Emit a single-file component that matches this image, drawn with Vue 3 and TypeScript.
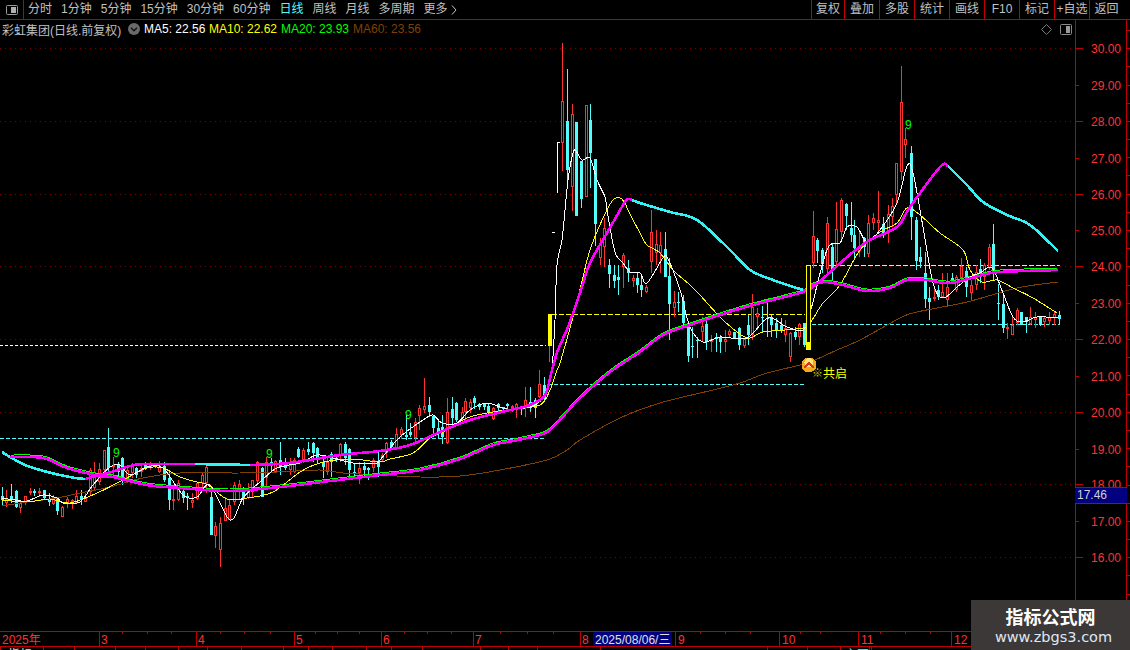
<script setup lang="ts">
type Row = [number, number, number, number, number, number]
interface Group { ox: number; oy: number; rows: Row[] }

const periods = ['分时', '1分钟', '5分钟', '15分钟', '30分钟', '60分钟', '日线', '周线', '月线', '多周期']
const actions = ['复权', '叠加', '多股', '统计', '画线', 'F10', '标记', '+自选', '返回']
const averages = [
  { label: 'MA5: 22.56', cls: 'ma5' },
  { label: 'MA10: 22.62', cls: 'ma10' },
  { label: 'MA20: 23.93', cls: 'ma20' },
  { label: 'MA60: 23.56', cls: 'ma60' },
]

// x, high, body top, body bottom, low, 0 = rising (hollow red) / 1 = falling (solid cyan); 3x crop coordinates
const groups: Group[] = [
  { ox: 0, oy: 425, rows: [
    [6,185,212,225,240,1],[18,195,222,235,245,0],[34,178,212,225,235,1],[48,195,198,245,250,1],[61,225,235,248,265,0],
    [76,213,214,235,240,0],[90,190,197,205,210,0],[103,192,197,203,212,1],[118,190,197,205,215,0],[133,195,196,220,225,1],
    [146,205,225,232,242,1],[160,210,215,238,240,0],[172,220,222,258,270,1],[187,243,245,275,275,0],[202,215,222,237,248,0],
    [216,222,225,230,252,0],[229,195,213,235,238,0],[243,195,212,222,240,1],[256,205,215,230,232,0],[270,130,135,200,210,0],
    [283,110,140,190,195,0],[298,115,133,170,180,0],[313,75,75,135,140,0],[325,10,67,130,160,1],[340,95,120,125,155,0],
    [354,110,120,140,165,1],[367,95,98,160,180,1],[382,125,135,160,175,0],[396,115,122,145,160,0],[409,125,128,150,160,1],
    [423,120,130,140,155,0],[436,110,113,125,135,1],[451,110,120,130,135,0],[464,115,120,125,130,1],[478,108,125,140,145,0],
    [493,110,122,165,170,1],[508,140,160,225,255,1],[520,190,222,228,255,0],[535,165,175,225,228,0],[549,190,197,218,235,1],
    [562,205,212,220,255,1],[577,205,225,235,250,0],[590,170,175,222,225,0],[605,145,150,175,195,0],[619,120,125,175,205,0],
    [632,190,215,330,330,1],[646,290,303,333,370,0],[661,275,295,375,425,0],[674,215,250,288,288,0],[688,225,240,285,285,0],
    [701,170,180,230,240,0],[716,165,178,192,222,0],[730,185,190,222,240,1],[743,175,198,220,222,0],[757,165,165,200,215,0],
    [771,108,110,168,180,0],[785,125,128,215,215,1],[799,95,112,160,185,0],[813,100,110,122,145,1],[826,105,108,140,145,0],
    [841,52,105,125,150,1],[855,100,120,128,135,1],[869,100,120,135,150,0],[883,100,105,140,145,0],[895,65,72,95,100,1],
    [909,70,75,105,115,0],[925,52,72,80,90,1],[939,52,55,85,110,1],[952,65,68,105,115,1],[968,90,110,125,160,1],
    [980,100,110,140,150,0],[994,80,88,110,155,1],[1007,90,98,105,110,1],[1021,55,57,90,110,0],[1035,50,57,100,120,1],
    [1048,70,72,135,165,1],[1062,115,140,145,160,1],[1078,110,130,145,178,0],[1091,110,122,135,160,1],[1105,125,130,135,165,1],
    [1120,100,105,130,140,0],[1133,80,112,125,155,1],
  ] },
  { ox: 380, oy: 370, rows: [
    [5,250,255,270,275,0],[18,215,220,250,265,0],[33,210,215,230,235,1],[48,175,193,235,240,0],[62,170,177,195,208,0],
    [77,135,195,200,210,1],[91,160,185,195,200,1],[104,145,155,205,215,0],[118,105,115,137,180,0],[131,25,108,120,130,0],
    [146,80,105,125,140,1],[160,135,138,173,195,1],[173,150,175,190,205,1],[187,135,170,200,222,1],[202,85,125,220,222,0],
    [215,82,118,145,165,1],[229,95,100,150,155,1],[245,112,125,145,150,0],[255,85,93,125,155,0],[270,88,95,115,130,0],
    [283,78,85,98,118,1],[298,100,102,110,120,1],[312,98,103,112,120,1],[325,100,108,130,135,1],[340,112,113,148,150,0],
    [355,100,103,113,125,1],[368,110,112,117,130,1],[382,100,102,108,125,1],[396,105,108,115,125,0],[409,100,103,120,145,0],
    [422,110,112,118,135,1],[436,52,90,110,140,0],[450,52,95,115,125,1],[464,85,90,115,145,1],[478,0,42,80,85,0],
    [493,20,45,85,95,1],
  ] },
  { ox: 540, oy: 40, rows: [
    [67,10,184,308,392,0],[81,87,243,390,432,1],[97,192,222,440,513,0],[109,245,247,527,527,1],[124,362,362,476,505,1],
    [139,195,195,470,470,0],[151,192,240,338,445,1],[166,357,357,552,618,1],
  ] },
  { ox: 540, oy: 210, rows: [
    [181,85,103,145,165,0],[193,25,55,112,170,0],[208,148,165,192,235,1],[221,165,195,213,235,1],[235,165,202,210,255,1],
    [250,130,135,172,235,0],[263,150,175,188,215,1],[278,195,205,213,232,0],[292,190,205,225,250,1],[304,200,226,240,260,1],
    [319,225,232,246,250,0],[334,0,67,155,190,0],[347,60,102,130,165,0],[361,65,105,130,190,0],[374,67,118,200,200,1],
    [388,145,198,282,390,1],[403,243,277,293,320,0],[415,245,276,280,305,1],[430,255,272,340,350,1],[445,340,340,437,455,1],
    [457,350,408,411,443,1],[472,380,390,393,445,1],
  ] },
  { ox: 640, oy: 220, rows: [
    [186,290,318,335,365,0],[199,300,312,365,390,1],[214,345,358,365,395,0],[227,340,350,356,395,1],[241,345,350,365,400,1],
    [256,330,358,365,395,0],[268,328,333,345,355,0],[283,335,335,355,355,1],[298,320,325,375,390,1],[311,355,358,378,385,0],
    [325,285,315,345,375,1],[337,222,262,345,360,0],[352,265,280,290,330,0],[367,257,290,292,340,1],[380,245,295,295,350,1],
    [394,285,290,315,350,1],[409,295,310,330,355,1],[422,295,315,330,340,1],[436,300,325,345,365,0],[451,335,340,410,425,0],
    [464,320,335,350,360,1],[478,310,312,350,375,0],[491,310,310,375,380,1],
  ] },
  { ox: 800, oy: 60, rows: [
    [40,452,528,608,625,0],[52,535,540,572,610,1],[67,565,570,612,640,1],[82,470,490,628,645,0],[95,550,560,628,660,1],
    [108,425,508,605,620,0],[124,415,420,515,540,0],[137,430,432,468,510,1],[152,425,505,525,545,1],[163,480,525,565,600,1],
    [178,515,558,572,590,0],[192,530,535,560,590,1],[205,465,490,582,592,0],[220,460,475,490,510,0],[235,392,480,488,515,0],
    [248,470,492,525,535,1],[263,435,462,520,548,0],[275,415,438,470,500,0],[289,310,310,405,430,0],[304,18,127,335,360,0],
    [316,205,238,254,295,0],[332,258,280,470,540,1],[347,470,480,603,630,1],[359,560,590,605,625,1],[374,575,638,718,745,1],
    [388,680,713,725,780,1],[401,680,712,718,722,0],[415,675,690,710,720,1],[427,640,697,712,715,0],[442,640,682,720,742,0],
    [457,640,655,662,670,1],[469,645,652,690,695,0],[484,595,617,655,660,0],[499,620,632,680,710,1],[512,660,675,698,722,0],
    [527,615,635,675,690,0],[541,598,628,640,670,1],[553,610,615,650,690,0],[568,552,562,625,630,0],[580,492,552,635,660,1],
    [595,672,728,732,780,1],[610,705,733,805,818,1],[622,790,800,805,838,0],[637,765,795,825,825,0],[652,745,750,790,795,0],
    [664,755,755,795,795,1],[678,770,770,785,820,1],[691,740,770,792,795,0],[705,755,770,780,805,0],[720,770,772,795,798,1],
    [733,770,775,785,800,0],[748,755,772,782,795,0],[762,755,762,775,795,0],[776,752,765,778,793,1],
  ] },
]

const candles = groups.flatMap(g => g.rows.map(r => ({
  x: Math.round(g.ox + r[0] / 3),
  hi: Math.round(g.oy + r[1] / 3),
  top: Math.round(g.oy + r[2] / 3),
  bot: Math.round(g.oy + r[3] / 3),
  lo: Math.round(g.oy + r[4] / 3),
  fall: r[5] === 1,
})))

function curve(flat: number[], dy = 0): string {
  const p: [number, number][] = []
  for (let i = 0; i < flat.length; i += 2) p.push([flat[i], flat[i + 1] + dy])
  let d = `M${p[0][0]} ${p[0][1]}`
  for (let i = 0; i < p.length - 1; i++) {
    const a = p[Math.max(i - 1, 0)], b = p[i], c = p[i + 1], e = p[Math.min(i + 2, p.length - 1)]
    const k = 6
    d += `C${(b[0] + (c[0] - a[0]) / k).toFixed(1)} ${(b[1] + (c[1] - a[1]) / k).toFixed(1)} ${(c[0] - (e[0] - b[0]) / k).toFixed(1)} ${(c[1] - (e[1] - b[1]) / k).toFixed(1)} ${c[0]} ${c[1]}`
  }
  return d
}

const ma60 = curve([2,506,27,502,57,498,80,493,110,487,143,478,180,473,240,473,277,472,320,470,343,473,380,475,420,477,460,476,500,470,547,460,567,450,580,440,620,418,660,403,713,390,740,383,767,373,807,363,837,350,860,340,900,318,917,312,967,302,1017,288,1058,282])
const ma5 = curve([2,498,15,500,27,501,43,495,57,498,63,503,80,502,93,485,110,467,120,465,130,475,147,467,163,468,183,495,197,497,210,485,230,520,243,498,260,482,277,468,300,463,317,455,333,458,353,463,377,463,380,460,400,437,423,420,433,415,442,423,457,423,470,410,487,403,507,409,530,407,543,398,550,380,552,370,555,320,557,265,562,240,565,210,568,180,572,157,575,150,582,160,590,158,597,180,605,197,607,210,615,252,623,263,630,272,640,273,647,283,663,258,668,259,680,290,690,327,703,342,720,337,747,338,768,318,787,327,803,330,810,313,827,250,840,243,847,227,857,227,867,242,880,230,897,203,907,166,913,173,923,227,933,283,943,298,957,287,970,277,980,273,992,268,1003,293,1013,317,1023,322,1037,317,1058,318])
const ma10 = curve([2,500,27,502,50,499,70,503,97,493,123,480,147,468,163,468,180,477,197,482,208,485,227,499,247,498,273,492,300,472,320,463,350,459,380,462,390,459,413,453,430,438,447,430,467,418,487,413,513,409,540,405,550,390,557,370,560,363,573,317,583,277,590,250,603,218,613,200,620,198,625,203,628,210,640,233,647,245,660,253,673,270,690,285,700,295,723,320,747,338,763,332,803,328,812,320,823,303,840,285,860,250,880,232,897,223,907,208,920,215,940,233,963,250,970,270,982,282,997,280,1013,288,1033,298,1057,313])
const lower = [10,457,43,458,67,468,100,476,113,477,147,485,180,488,230,491,280,487,330,481,380,475,420,470,460,459,493,445,513,441,543,434,553,427,567,412,580,398,610,372,640,352,663,335,690,325,720,315,753,305,803,292,813,285,825,282,843,285,867,291,890,288,907,280,927,280,950,283,983,275,1000,272,1058,270]
const ma20 = curve(lower, -2)
const lowerPath = curve(lower)
const upperCyan = [
  curve([2,452,10,457,25,465,40,470,60,475,75,478,85,479]),
  curve([195,464,250,465]),
  curve([632,200,640,203,670,212,697,220,730,250,750,270,773,280,803,290]),
  curve([948,166,967,185,983,202,1007,215,1030,225,1058,251]),
]
const upperPink = [
  curve([85,479,100,475,115,471,130,466,145,464,195,464]),
  curve([250,465,290,463,340,455,380,451,410,445,440,432,470,420,510,410,530,405,545,395,552,370,558,350,568,327,580,293,590,263,607,233,623,205,628,199,632,200]),
  curve([803,290,813,287,853,252,870,240,897,227,910,207,940,167,948,166]),
]
const grid = [48, 121, 194, 266, 339, 412, 484, 557]
const nines: [number, number][] = [[113, 457], [266, 458], [405, 419], [905, 129]]

const prices = [
  ['30.00', 48], ['29.00', 85], ['28.00', 121], ['27.00', 158], ['26.00', 194], ['25.00', 230], ['24.00', 266],
  ['23.00', 303], ['22.00', 339], ['21.00', 376], ['20.00', 412], ['19.00', 449], ['18.00', 484], ['17.00', 521], ['16.00', 557],
].map(([label, y], i) => ({ label: label as string, y: y as number, long: i % 2 === 0 }))
const minor = Array.from({ length: 33 }, (_, i) => 30 + i * 18.18)

const dividers = [99, 196, 294, 381, 473, 580, 675, 779, 858, 951]
const months = [['2025年', 2], ['3', 101], ['4', 198], ['5', 296], ['6', 383], ['7', 475], ['8', 582], ['9', 678], ['10', 782], ['11', 861], ['12', 954]]
  .map(([t, x]) => ({ t: t as string, x: x as number }))
const timeTicks = [122, 147, 171, 220, 244, 270, 315, 337, 359, 404, 427, 451, 500, 527, 553, 620, 700, 725, 750, 800, 820, 880, 905, 930, 975]
const tabs = [43, 74, 115, 145, 178, 207, 241, 283, 308, 332, 366, 391, 422, 480, 508, 537, 600, 767, 807, 840, 869, 871]
</script>

<template>
  <div class="screen">
    <header class="toolbar">
      <div class="layout-btn">
        <svg width="12" height="10" viewBox="0 0 12 10">
          <rect x="0.5" y="0.5" width="11" height="9" rx="1" fill="#000" stroke="#9a9a9a" />
          <rect x="5" y="2" width="5" height="6" fill="#b0b0b0" />
        </svg>
      </div>
      <nav class="periods">
        <span v-for="p in periods" :key="p" :class="{ active: p === '日线' }">{{ p }}</span>
        <span class="more">更多
          <svg width="6" height="10" viewBox="0 0 6 10"><path d="M1 0.5 L5 5 L1 9.5" fill="none" stroke="#c0c0c0" /></svg>
        </span>
      </nav>
      <div class="actions">
        <span v-for="a in actions" :key="a" class="action">{{ a }}</span>
      </div>
    </header>

    <div class="main">
      <section class="chart">
        <div class="legend">
          <span class="title">彩虹集团(日线.前复权)</span>
          <svg class="chev" width="12" height="12" viewBox="0 0 12 12">
            <circle cx="6" cy="6" r="6" fill="#6a6a6a" />
            <path d="M3 4.8 L6 7.8 L9 4.8" fill="none" stroke="#111" stroke-width="1.4" />
          </svg>
          <span v-for="m in averages" :key="m.cls" :class="m.cls">{{ m.label }}</span>
          <svg class="diamond" width="11" height="11" viewBox="0 0 11 11">
            <path d="M5.5 0.5 L10.5 5.5 L5.5 10.5 L0.5 5.5 Z" fill="none" stroke="#777" />
          </svg>
          <svg class="panel" width="12" height="11" viewBox="0 0 12 11">
            <rect x="0.5" y="0.5" width="11" height="10" rx="1" fill="#000" stroke="#8a8a8a" />
            <rect x="6" y="2" width="4" height="7" fill="#9a9a9a" />
          </svg>
        </div>
        <svg class="plot" width="1075" height="592" viewBox="0 38 1075 592">
          <line v-for="y in grid" :key="y" x1="0" x2="1075" :y1="y + 0.5" :y2="y + 0.5" class="grid" />

          <line x1="0" x2="546" y1="345.5" y2="345.5" class="dash white" />
          <line x1="0" x2="545" y1="438.5" y2="438.5" class="dash cyan" />
          <line x1="552" x2="805" y1="314.5" y2="314.5" class="dash yellow" />
          <line x1="548" x2="805" y1="384.5" y2="384.5" class="dash cyan" />
          <line x1="812" x2="1060" y1="265.5" y2="265.5" class="dash yellow" />
          <line x1="812" x2="1060" y1="324.5" y2="324.5" class="dash cyan" />

          <g v-for="(c, i) in candles" :key="i" :class="c.fall ? 'fall' : 'rise'">
            <rect :x="c.x" :y="c.hi" width="1" :height="Math.max(c.lo - c.hi, 1)" class="wick" />
            <rect v-if="c.fall" :x="c.x - 1" :y="c.top" width="3" :height="Math.max(c.bot - c.top, 1)" class="body" />
            <rect v-else :x="c.x - 0.5" :y="c.top + 0.5" width="2" :height="Math.max(c.bot - c.top - 1, 1)" class="body" />
          </g>

          <rect x="549" y="346" width="1" height="16" class="bar-red" />
          <rect x="548" y="314" width="4" height="32" class="solid-yellow" />
          <rect x="552" y="232" width="3" height="1" class="solid-white" />
          <rect x="557" y="142" width="1" height="51" class="solid-white" />
          <rect x="557" y="142" width="3" height="1" class="solid-white" />

          <path :d="ma60" class="line brown" />
          <path :d="ma20" class="line green" />
          <path :d="ma10" class="line yellow" />
          <path :d="ma5" class="line white" />
          <path v-for="(d, i) in upperCyan" :key="'c' + i" :d="d" class="thick cyan" />
          <path v-for="(d, i) in upperPink" :key="'p' + i" :d="d" class="thick pink" />
          <path :d="lowerPath" class="thick pink" />

          <rect x="806.5" y="265.5" width="4" height="77" class="box" />
          <rect x="806" y="343" width="5" height="7" class="solid-yellow" />

          <text v-for="(n, i) in nines" :key="'n' + i" :x="n[0]" :y="n[1]" class="nine">9</text>

          <circle cx="809" cy="365" r="7.5" fill="#f7a81a" />
          <circle cx="809" cy="362.5" r="4.5" fill="#ffe27a" />
          <path d="M804 368 L809 363 L814 368" fill="none" stroke="#d8381a" stroke-width="2" />
          <text x="812" y="377" class="sign-mark">※</text>
          <text x="823" y="378" class="sign">共启</text>
        </svg>
      </section>
      <aside class="axis">
        <svg width="55" height="611" viewBox="1075 20 55 611">
          <line x1="1075.5" x2="1075.5" y1="20" y2="631" class="rule" />
          <line x1="1126.5" x2="1126.5" y1="20" y2="631" class="rule" />
          <line v-for="y in minor" :key="y" x1="1127" x2="1130" :y1="Math.round(y) + 0.5" :y2="Math.round(y) + 0.5" class="rule" />
          <g v-for="p in prices" :key="p.label">
            <line x1="1075" :x2="p.long ? 1083 : 1079" :y1="p.y + 0.5" :y2="p.y + 0.5" class="rule" />
            <text x="1091" :y="p.y + 5" class="price">{{ p.label }}</text>
          </g>
        </svg>
        <div class="last-price">17.46</div>
      </aside>
    </div>

    <footer class="timeline">
      <svg width="1130" height="19" viewBox="0 631 1130 19">
        <line x1="0" x2="1130" y1="631.5" y2="631.5" class="rule" />
        <line x1="0" x2="1130" y1="646.5" y2="646.5" class="rule" />
        <line v-for="x in dividers" :key="x" :x1="x + 0.5" :x2="x + 0.5" y1="631" y2="646" class="rule" />
        <line v-for="x in timeTicks" :key="'t' + x" :x1="x + 0.5" :x2="x + 0.5" y1="632" y2="634" class="rule" />
        <line x1="0.5" x2="0.5" y1="647" y2="650" class="rule" />
        <line v-for="x in tabs" :key="'b' + x" :x1="x + 0.5" :x2="x + 0.5" y1="647" y2="650" class="rule" />
        <text v-for="m in months" :key="m.t" :x="m.x" y="644" class="month">{{ m.t }}</text>
        <rect x="593" y="632" width="79" height="14" fill="#000080" />
        <text x="595" y="644" class="date">2025/08/06/三</text>
        <text x="8" y="659" class="tab">指标</text>
        <text x="845" y="659" class="tab active-tab">主图</text>
      </svg>
    </footer>

    <div class="watermark">
      <strong>指标公式网</strong>
      <span>www.zbgs3.com</span>
    </div>
  </div>
</template>

<style>
html, body { background: #000; margin: 0; overflow: hidden; }
</style>

<style scoped>
.screen {
  position: relative;
  width: 1130px;
  height: 650px;
  overflow: hidden;
  background: #000;
  display: flex;
  flex-direction: column;
  font: 12px "Liberation Sans", "Noto Sans CJK SC", sans-serif;
  color: #c0c0c0;
}
.toolbar {
  display: flex;
  align-items: stretch;
  height: 19px;
  border-bottom: 1px solid #c00000;
  line-height: 19px;
  flex: none;
}
.layout-btn {
  width: 23px;
  border-right: 1px solid #c00000;
  display: flex;
  align-items: center;
  justify-content: center;
}
.periods {
  display: flex;
  gap: 9px;
  padding-left: 4px;
}
.periods .active { color: #54fcfc; }
.more { display: flex; align-items: center; gap: 3px; }
.actions { margin-left: auto; display: flex; }
.action {
  width: 35px;
  box-sizing: border-box;
  border-left: 1px solid #c00000;
  text-align: center;
  white-space: nowrap;
}
.action:first-child { width: 33px; }
.action:last-child { width: 41px; padding-right: 7px; }

.main { display: flex; height: 611px; flex: none; }
.chart { width: 1075px; display: flex; flex-direction: column; }
.legend {
  height: 18px;
  display: flex;
  align-items: center;
  padding: 0 3px 0 2px;
  white-space: nowrap;
  flex: none;
}
.title { width: 126px; }
.chev { margin-right: 4px; }
.legend .ma5 { color: #fff; width: 65px; }
.legend .ma10 { color: #ffff00; width: 72px; }
.legend .ma20 { color: #00ff00; width: 72px; }
.legend .ma60 { color: #804000; width: 72px; }
.diamond { margin-left: auto; margin-right: 8px; }
.plot { display: block; shape-rendering: crispEdges; }

.grid { stroke: #7a0000; stroke-dasharray: 1 4; }
.dash { stroke-width: 1; }
.dash.white { stroke: #fff; stroke-dasharray: 3 2; }
.dash.cyan { stroke: #54fcfc; stroke-dasharray: 4 2; }
.dash.yellow { stroke: #ffff00; stroke-dasharray: 5 2; }
.rise .wick { fill: #ff3232; }
.rise .body { fill: #000; stroke: #ff3232; }
.fall .wick, .fall .body { fill: #54fcfc; }
.bar-red { fill: #ff3232; }
.solid-yellow { fill: #ffff00; }
.solid-white { fill: #fff; }
.box { fill: #000; stroke: #ffff00; }
.line { fill: none; stroke-width: 1; }
.line.white { stroke: #fff; }
.line.yellow { stroke: #ffff00; }
.line.green { stroke: #00ff00; }
.line.brown { stroke: #804000; }
.thick { fill: none; stroke-width: 2.6; }
.thick.cyan { stroke: #33f4f4; }
.thick.pink { stroke: #ff00ff; }
.nine { fill: #00ff00; font-size: 12px; }
.sign { fill: #ffff00; font-size: 12px; }
.sign-mark { fill: #c8c800; font-size: 11px; }

.axis { position: relative; width: 55px; }
.axis svg { display: block; shape-rendering: crispEdges; }
.rule { stroke: #c00000; }
.price { fill: #ff3232; font-size: 12px; }
.last-price {
  position: absolute;
  left: 0;
  top: 467px;
  width: 50px;
  height: 15px;
  padding-left: 2px;
  background: #000080;
  border: solid #c00000;
  border-width: 1px 0;
  color: #d0d0d0;
  line-height: 15px;
}

.timeline { flex: none; height: 19px; }
.timeline svg { display: block; shape-rendering: crispEdges; }
.month { fill: #ff3232; font-size: 12px; }
.date { fill: #e0e0e0; font-size: 12px; }
.tab { fill: #e0e0e0; font-size: 12px; }
.active-tab { fill: #54fcfc; }

.watermark {
  position: absolute;
  right: 0;
  bottom: 0;
  width: 159px;
  height: 50px;
  background: #3c3838;
  display: flex;
  flex-direction: column;
  align-items: center;
  justify-content: center;
  color: #fff;
}
.watermark strong {
  font: 700 18px/24px "Noto Sans CJK SC", sans-serif;
}
.watermark span {
  font: 14.5px/18px "DejaVu Sans", sans-serif;
  color: #dce8f4;
  margin-left: 6px;
}
</style>
